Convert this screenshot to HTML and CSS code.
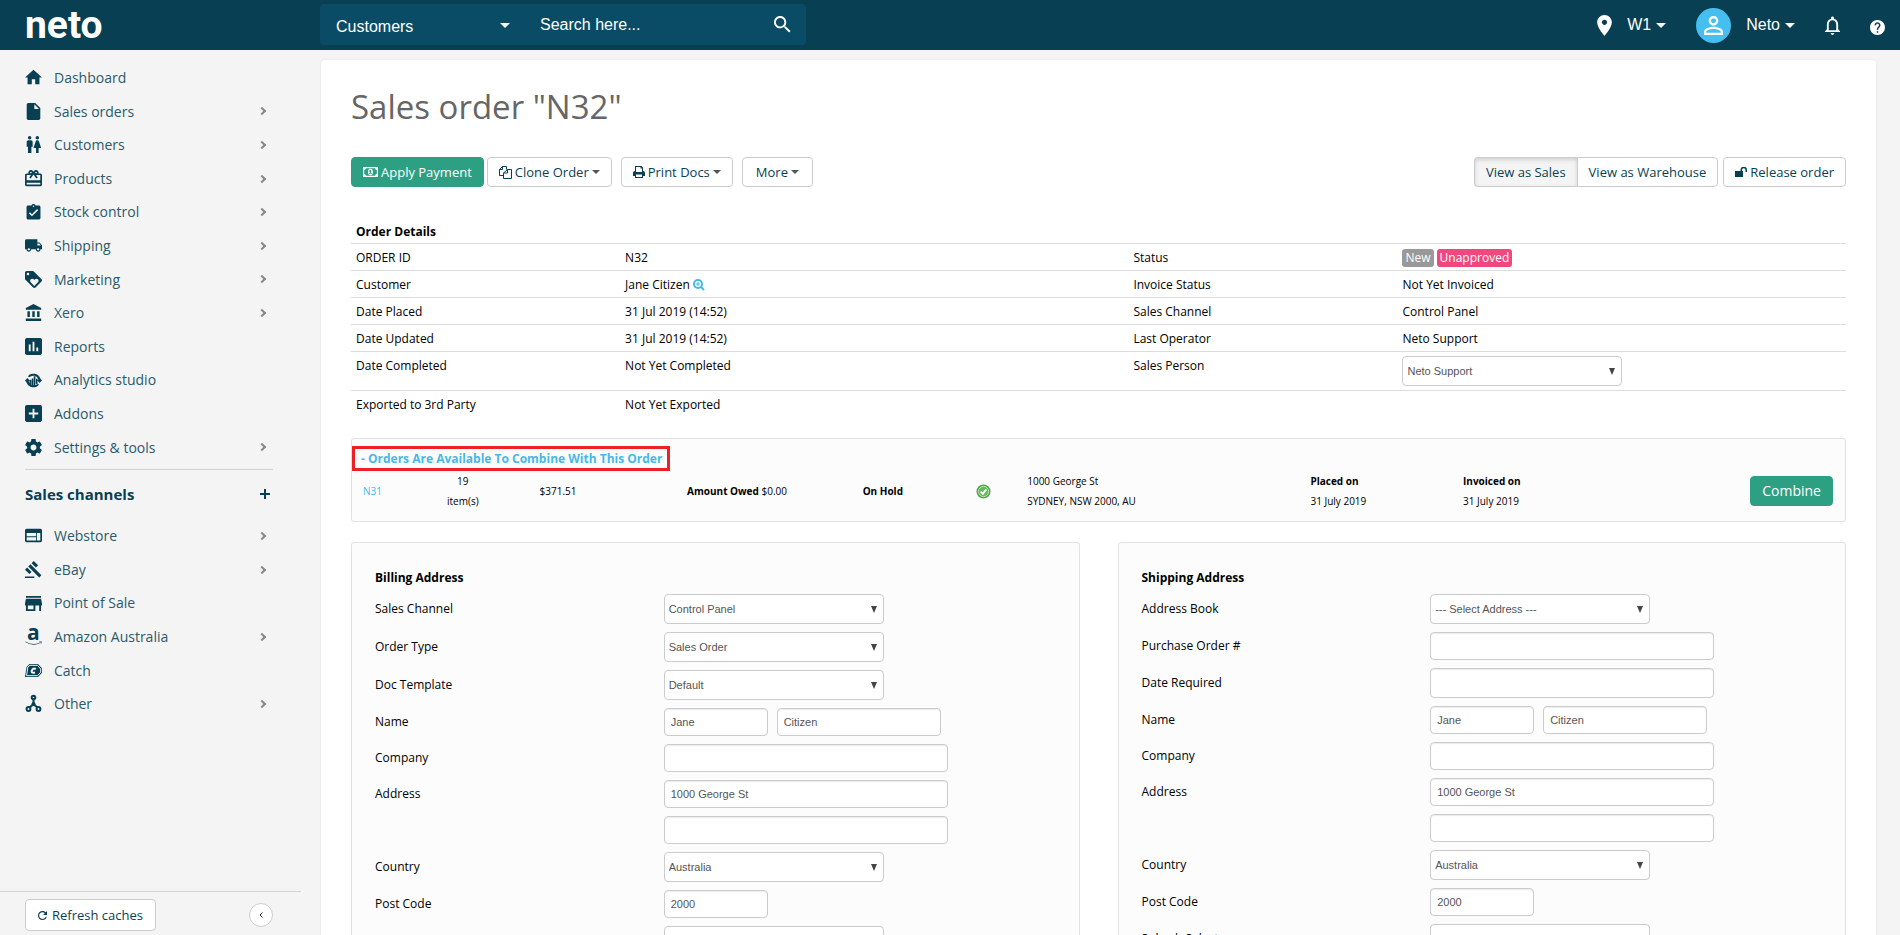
FILE: index.html
```html
<!DOCTYPE html>
<html lang="en">
<head>
<meta charset="utf-8">
<title>Sales order "N32"</title>
<link rel="stylesheet" href="styles.css">
</head>
<body class="app">
<header class="topbar">
  <a class="logo" href="#">neto</a>
  <form class="search">
    <span class="search-scope"><select class="scope-select" aria-label="Search in"><option>Customers</option></select></span>
    <input class="search-input" type="text" placeholder="Search here..." aria-label="Search">
    <button class="search-button" type="button" aria-label="Search"><svg viewBox="3 3 18 18" width="17" height="17"><path d="M15.5 14h-.79l-.28-.27C15.41 12.59 16 11.11 16 9.500 16 5.910 13.090 3 9.500 3S3 5.910 3 9.500 5.910 16 9.500 16c1.610 0 3.090-.59 4.230-1.570l.27.28v.79l5 4.990L20.490 19l-4.990-5zm-6 0C7.010 14 5 11.990 5 9.500S7.010 5 9.500 5 14 7.010 14 9.500 11.990 14 9.500 14z"/></svg></button>
  </form>
  <nav class="account">
    <a class="account-link warehouse" href="#"><svg viewBox="5 2 14 20" width="15" height="21"><path d="M12 2C8.130 2 5 5.130 5 9c0 5.250 7 13 7 13s7-7.750 7-13c0-3.870-3.130-7-7-7zm0 9.500c-1.380 0-2.500-1.120-2.500-2.500s1.120-2.500 2.500-2.500 2.500 1.120 2.500 2.500-1.120 2.500-2.500 2.500z"/></svg><span class="dropdown-text">W1<i class="caret caret-lg"></i></span></a>
    <a class="account-link user" href="#"><span class="avatar"><svg viewBox="4 4 16 16" width="19" height="19"><path d="M12 5.900c1.160 0 2.100.94 2.100 2.100s-.94 2.100-2.100 2.100S9.900 9.160 9.900 8s.94-2.100 2.100-2.100m0 9c2.970 0 6.100 1.460 6.100 2.100v1.100H5.900V17c0-.64 3.130-2.100 6.100-2.100M12 4C9.790 4 8 5.790 8 8s1.790 4 4 4 4-1.790 4-4-1.790-4-4-4zm0 9c-2.670 0-8 1.340-8 4v3h16v-3c0-2.660-5.330-4-8-4z"/></svg></span><span class="dropdown-text">Neto<i class="caret caret-lg"></i></span></a>
    <button class="icon-button bell" type="button" aria-label="Notifications"><svg viewBox="4 2 16 20" width="15" height="19"><path d="M12 22c1.100 0 2-.9 2-2h-4c0 1.100.9 2 2 2zm6-6v-5c0-3.070-1.630-5.640-4.500-6.320V4c0-.83-.67-1.500-1.500-1.500s-1.500.67-1.500 1.500v.68C7.640 5.360 6 7.920 6 11v5l-2 2v1h16v-1l-2-2zm-2 1H8v-6c0-2.480 1.510-4.500 4-4.500s4 2.020 4 4.500v6z"/></svg></button>
    <button class="icon-button help" type="button" aria-label="Help"><svg viewBox="2 2 20 20" width="15" height="15"><path d="M12 2C6.480 2 2 6.480 2 12s4.480 10 10 10 10-4.480 10-10S17.520 2 12 2zm1 17h-2v-2h2v2zm2.070-7.750l-.9.92C13.450 12.900 13 13.500 13 15h-2v-.5c0-1.100.45-2.100 1.170-2.830l1.240-1.260c.37-.36.59-.86.59-1.410 0-1.100-.9-2-2-2s-2 .9-2 2H8c0-2.210 1.790-4 4-4s4 1.790 4 4c0 .88-.36 1.680-.93 2.250z"/></svg></button>
  </nav>
</header>
<div class="shell">
  <aside class="sidebar">
    <ul class="menu">
      <li><a class="menu-link" href="#"><svg class="menu-icon" viewBox="2 2 20 20"><path d="M10 20v-6h4v6h5v-8h3L12 3 2 12h3v8z"/></svg>Dashboard</a></li>
      <li><a class="menu-link has-children" href="#"><svg class="menu-icon" viewBox="2 2 20 20"><path d="M6 2c-1.100 0-1.990.9-1.990 2L4 20c0 1.100.89 2 1.990 2H18c1.100 0 2-.9 2-2V8l-6-6H6zm7 7V3.500L18.500 9H13z"/></svg>Sales orders</a></li>
      <li><a class="menu-link has-children" href="#"><svg class="menu-icon" viewBox="2 2 20 20"><path d="M5.500 22v-7.500H4V9c0-1.100.9-2 2-2h3c1.100 0 2 .9 2 2v5.500H9.500V22h-4zM18 22v-6h3l-2.540-7.630C18.180 7.550 17.420 7 16.560 7h-.12c-.86 0-1.630.55-1.900 1.370L12 16h3v6h3zM7.500 6c1.110 0 2-.89 2-2s-.89-2-2-2-2 .89-2 2 .89 2 2 2zm9 0c1.110 0 2-.89 2-2s-.89-2-2-2-2 .89-2 2 .89 2 2 2z"/></svg>Customers</a></li>
      <li><a class="menu-link has-children" href="#"><svg class="menu-icon" viewBox="2 2 20 20"><path d="M20 6h-2.180c.11-.31.18-.65.18-1 0-1.660-1.340-3-3-3-1.050 0-1.960.54-2.500 1.350l-.5.67-.5-.68C10.960 2.540 10.050 2 9 2 7.340 2 6 3.340 6 5c0 .35.07.69.18 1H4c-1.110 0-1.990.89-1.990 2L2 19c0 1.110.89 2 2 2h16c1.110 0 2-.89 2-2V8c0-1.110-.89-2-2-2zm-5-2c.55 0 1 .45 1 1s-.45 1-1 1-1-.45-1-1 .45-1 1-1zM9 4c.55 0 1 .45 1 1s-.45 1-1 1-1-.45-1-1 .45-1 1-1zm11 15H4v-2h16v2zm0-5H4V8h5.080L7 10.830 8.620 12 11 8.760l1-1.360 1 1.360L15.380 12 17 10.830 14.920 8H20v6z"/></svg>Products</a></li>
      <li><a class="menu-link has-children" href="#"><svg class="menu-icon" viewBox="1 1 22 22"><path d="M19 3h-4.180C14.400 1.840 13.300 1 12 1c-1.300 0-2.400.84-2.820 2H5c-1.100 0-2 .9-2 2v14c0 1.100.9 2 2 2h14c1.100 0 2-.9 2-2V5c0-1.100-.9-2-2-2zm-7 0c.55 0 1 .45 1 1s-.45 1-1 1-1-.45-1-1 .45-1 1-1zm-2 14l-4-4 1.410-1.410L10 14.170l6.590-6.590L18 9l-8 8z"/></svg>Stock control</a></li>
      <li><a class="menu-link has-children" href="#"><svg class="menu-icon" viewBox="1 1 22 22"><path d="M20 8h-3V4H3c-1.100 0-2 .9-2 2v11h2c0 1.660 1.340 3 3 3s3-1.340 3-3h6c0 1.660 1.340 3 3 3s3-1.340 3-3h2v-5l-3-4zM6 18.500c-.83 0-1.500-.67-1.500-1.500s.67-1.500 1.500-1.500 1.500.67 1.500 1.500-.67 1.500-1.500 1.500zm13.500-9l1.960 2.500H17V9.500h2.500zm-1.500 9c-.83 0-1.500-.67-1.500-1.500s.67-1.500 1.500-1.500 1.500.67 1.500 1.500-.67 1.500-1.500 1.500z"/></svg>Shipping</a></li>
      <li><a class="menu-link has-children" href="#"><svg class="menu-icon" viewBox="2 2 20 20"><path d="M21.410 11.580l-9-9C12.050 2.220 11.550 2 11 2H4c-1.100 0-2 .9-2 2v7c0 .55.22 1.050.59 1.420l9 9c.36.36.86.58 1.410.58.55 0 1.050-.22 1.410-.59l7-7c.37-.36.59-.86.59-1.410 0-.55-.23-1.060-.59-1.420zM5.500 7C4.670 7 4 6.330 4 5.500S4.670 4 5.500 4 7 4.670 7 5.500 6.330 7 5.500 7zm11.770 8.270L13 19.540l-4.270-4.270C8.280 14.810 8 14.190 8 13.500c0-1.380 1.120-2.500 2.500-2.500.69 0 1.320.28 1.770.74l.73.72.73-.73c.45-.45 1.080-.73 1.770-.73 1.380 0 2.500 1.120 2.500 2.500 0 .69-.28 1.320-.73 1.770z"/></svg>Marketing</a></li>
      <li><a class="menu-link has-children" href="#"><svg class="menu-icon" viewBox="1 1 21 21"><path d="M4 10v7h3v-7H4zm6 0v7h3v-7h-3zM2 22h19v-3H2v3zm14-12v7h3v-7h-3zm-4.500-9L2 6v2h19V6l-9.500-5z"/></svg>Xero</a></li>
      <li><a class="menu-link" href="#"><svg class="menu-icon" viewBox="3 3 18 18"><path d="M19 3H5c-1.100 0-2 .9-2 2v14c0 1.100.9 2 2 2h14c1.100 0 2-.9 2-2V5c0-1.100-.9-2-2-2zM9 17H7v-7h2v7zm4 0h-2V7h2v10zm4 0h-2v-4h2v4z"/></svg>Reports</a></li>
      <li><a class="menu-link" href="#"><svg class="menu-icon" viewBox="0 0 20 20"><path d="M5.500 9h2v5.500h-2zM8 7.500h1.800v8H8zM10.300 5h1.900v10.500h-1.900zM12.800 8h1.900v6h-1.900zM3.500 5A8.500 8.500 0 0 1 18 7.500l2 2.500-3 3-2.800-3.500 1.600-.5A6.400 6.400 0 0 0 5 6.300zM16.500 15A8.500 8.500 0 0 1 2 12.500L0 10l3-3 2.800 3.500-1.600.5A6.400 6.400 0 0 0 15 13.700z"/></svg>Analytics studio</a></li>
      <li><a class="menu-link" href="#"><svg class="menu-icon" viewBox="3 3 18 18"><path d="M19 3H5c-1.110 0-2 .9-2 2v14c0 1.100.89 2 2 2h14c1.100 0 2-.9 2-2V5c0-1.100-.9-2-2-2zm-2 10h-4v4h-2v-4H7v-2h4V7h2v4h4v2z"/></svg>Addons</a></li>
      <li><a class="menu-link has-children" href="#"><svg class="menu-icon" viewBox="2 2 20 20"><path d="M19.430 12.980c.04-.32.07-.64.07-.98s-.03-.66-.07-.98l2.110-1.650c.19-.15.24-.42.12-.64l-2-3.460c-.12-.22-.39-.3-.61-.22l-2.490 1c-.52-.4-1.080-.73-1.690-.98l-.38-2.650C14.460 2.180 14.250 2 14 2h-4c-.25 0-.46.18-.49.42l-.38 2.650c-.61.25-1.170.59-1.690.98l-2.490-1c-.23-.09-.49 0-.61.22l-2 3.460c-.13.22-.07.49.12.64l2.110 1.650c-.04.32-.07.65-.07.98s.03.66.07.98l-2.110 1.650c-.19.15-.24.42-.12.64l2 3.460c.12.22.39.3.61.22l2.490-1c.52.4 1.080.73 1.690.98l.38 2.650c.03.24.24.42.49.42h4c.25 0 .46-.18.49-.42l.38-2.650c.61-.25 1.170-.59 1.690-.98l2.490 1c.23.09.49 0 .61-.22l2-3.460c.12-.22.07-.49-.12-.64l-2.110-1.650zM12 15.500c-1.930 0-3.500-1.570-3.500-3.500s1.570-3.500 3.500-3.500 3.500 1.570 3.500 3.500-1.570 3.500-3.500 3.500z"/></svg>Settings &amp; tools</a></li>
    </ul>
    <div class="channels-head"><h2 class="channels-title">Sales channels</h2><button class="icon-button" type="button" aria-label="Add sales channel"><svg viewBox="0 0 10 10" width="10" height="10"><path d="M4 0h2v4h4v2H6v4H4V6H0V4h4z"/></svg></button></div>
    <ul class="menu">
      <li><a class="menu-link has-children" href="#"><svg class="menu-icon" viewBox="2 2 20 20"><path d="M20 4H4c-1.100 0-1.990.9-1.990 2L2 18c0 1.100.9 2 2 2h16c1.100 0 2-.9 2-2V6c0-1.100-.9-2-2-2zm-5 14H4v-4h11v4zm0-5H4V9h11v4zm5 5h-4V9h4v9z"/></svg>Webstore</a></li>
      <li><a class="menu-link has-children" href="#"><svg class="menu-icon" viewBox="1 1 22 22"><path d="M1 21h12v2H1zM5.245 8.070l2.830-2.827 14.140 14.142-2.828 2.828zM12.317 1l5.657 5.656-2.830 2.830-5.654-5.660zM3.825 9.485l5.657 5.657-2.828 2.828-5.657-5.657z"/></svg>eBay</a></li>
      <li><a class="menu-link" href="#"><svg class="menu-icon" viewBox="3 3 18 18"><path d="M20 4H4v2h16V4zm1 10v-2l-1-5H4l-1 5v2h1v6h10v-6h4v6h2v-6h1zm-9 4H6v-4h6v4z"/></svg>Point of Sale</a></li>
      <li><a class="menu-link has-children" href="#"><svg class="menu-icon" viewBox="0 0 17 17"><text class="amazon-letter" x="2" y="12">a</text><path d="M.5 13.500Q8 18 14.800 14.400l.4.700Q8 19 .3 14zM13.500 13.600l3.300-.2-.8 2.800-.4-1.900z"/></svg>Amazon Australia</a></li>
      <li><a class="menu-link" href="#"><svg class="menu-icon" viewBox="0 0 17 17"><path d="M4.500 2H13l4 4.300v4.400L13 15H0l1.500-10z"/><path class="knock" d="M5 3.300h7.500L15.700 7v3.200l-3.200 3.500H1.600L2.800 5z"/><path d="M4.800 4.600h6.600L13.800 8.500 11.400 12.600H3.200l1-7z"/><path class="knock knock-bold" d="M10.800 7.200Q8.300 5.500 6.900 8.500T10 10.600"/></svg>Catch</a></li>
      <li><a class="menu-link has-children" href="#"><svg class="menu-icon stroke-icon" viewBox="0 0 17 17"><circle cx="8.500" cy="2.500" r="1.800"/><circle cx="3.500" cy="14" r="1.900"/><circle cx="13.500" cy="14" r="1.900"/><circle cx="8.500" cy="9" r="1"/><path d="M8.500 4.300V8M7.700 9.800l-3 2.700M9.300 9.800l3 2.700"/></svg>Other</a></li>
    </ul>
    <div class="sidebar-foot">
      <button class="refresh" type="button"><svg viewBox="4 4 16 16" width="9" height="9"><path d="M17.650 6.350C16.200 4.900 14.210 4 12 4c-4.420 0-7.990 3.580-7.990 8s3.570 8 7.990 8c3.730 0 6.840-2.550 7.730-6h-2.080c-.82 2.330-3.040 4-5.650 4-3.310 0-6-2.690-6-6s2.690-6 6-6c1.660 0 3.140.69 4.220 1.780L13 11h7V4l-2.350 2.350z"/></svg>Refresh caches</button>
      <button class="collapse" type="button" aria-label="Collapse menu"><svg viewBox="0 0 4 6" width="4" height="6"><path d="M3.500.5L1 3l2.500 2.500"/></svg></button>
    </div>
  </aside>
  <main class="main">
    <div class="card">
      <h1 class="page-title">Sales order "N32"</h1>
      <div class="toolbar">
        <div class="tool-group">
          <button class="btn btn-primary payment" type="button"><svg viewBox="0 0 15 10" width="15" height="10"><path fill-rule="evenodd" d="M0 0h15v10H0zM3 1.200A2 2 0 0 1 1.200 3v4A2 2 0 0 1 3 8.800h9A2 2 0 0 1 13.800 7V3A2 2 0 0 1 12 1.200zM7.500 1.800a2.400 3.200 0 0 1 0 6.400 2.400 3.200 0 0 1 0-6.400zM7 3l-1 .8v.6l.8-.2V6H6v.8h3V6h-.8V3z"/></svg>Apply Payment</button>
          <button class="btn clone" type="button"><svg class="line" viewBox="0 0 13 13" width="13" height="13"><path d="M3.500.5h4v3M3.500.5L.5 3.500v6h4M3.500.5v3h-3M8.500 3.500h4v9h-8V7zM8.500 3.500v3.500h-4"/></svg>Clone Order<i class="caret"></i></button>
          <button class="btn" type="button"><svg viewBox="0 0 12 12" width="12" height="12"><path fill-rule="evenodd" d="M2 0h6.500L10 1.500V5a2 2 0 0 1 2 2v3h-2v2H2v-2H0V7a2 2 0 0 1 2-2zm1 1v5h6V2.500H7.500V1zm0 7.500V11h6V8.500z"/></svg>Print Docs<i class="caret"></i></button>
          <button class="btn btn-roomy" type="button">More<i class="caret"></i></button>
        </div>
        <div class="tool-group view-group">
          <div class="segmented"><button class="btn active" type="button">View as Sales</button><button class="btn" type="button">View as Warehouse</button></div>
          <button class="btn" type="button"><svg viewBox="0 0 12 10" width="12" height="10"><path d="M0 4h5.500V3a3 3 0 0 1 6.500 0v2h-1.500V3a1.500 1.500 0 0 0-3.500 0v1H8v6H0z"/></svg>Release order</button>
        </div>
      </div>

      <table class="details">
        <colgroup><col class="c-name"><col class="c-wide"><col class="c-name"><col class="c-last"></colgroup>
        <thead><tr><th colspan="4">Order Details</th></tr></thead>
        <tbody>
          <tr><td>ORDER ID</td><td>N32</td><td>Status</td><td><span class="tags"><span class="tag tag-new">New</span><span class="tag tag-unapproved">Unapproved</span></span></td></tr>
          <tr><td>Customer</td><td>Jane Citizen <a class="lookup" href="#" aria-label="View customer"><svg viewBox="0 0 12 12" width="12" height="12"><circle cx="5" cy="5" r="4"/><path class="lens" d="M5 3v4M3 5h4"/><path d="M8 8l3 3"/></svg></a></td><td>Invoice Status</td><td>Not Yet Invoiced</td></tr>
          <tr><td>Date Placed</td><td>31 Jul 2019 (14:52)</td><td>Sales Channel</td><td>Control Panel</td></tr>
          <tr><td>Date Updated</td><td>31 Jul 2019 (14:52)</td><td>Last Operator</td><td>Neto Support</td></tr>
          <tr><td>Date Completed</td><td>Not Yet Completed</td><td><label for="person">Sales Person</label></td><td class="control-cell"><span class="select"><select id="person"><option>Neto Support</option></select></span></td></tr>
          <tr><td>Exported to 3rd Party</td><td>Not Yet Exported</td><td></td><td></td></tr>
        </tbody>
      </table>

      <section class="combine">
        <a class="combine-title" href="#">- Orders Are Available To Combine With This Order</a>
        <div class="combine-row">
          <a href="#">N31</a>
          <span class="items">19<br>item(s)</span>
          <span>$371.51</span>
          <span><b>Amount Owed</b> $0.00</span>
          <b>On Hold</b>
          <span class="ok"><svg viewBox="0 0 16 16" width="15" height="15"><circle class="ok-ring" cx="8" cy="8" r="7.500"/><circle class="ok-disc" cx="8" cy="8" r="5.500"/><path class="ok-tick" d="M5 8.200l2.200 2.300L11 5.800"/></svg></span>
          <span>1000 George St<br>SYDNEY, NSW 2000, AU</span>
          <span><b>Placed on</b><br>31 July 2019</span>
          <span><b>Invoiced on</b><br>31 July 2019</span>
          <button class="btn btn-primary combine-btn" type="button">Combine</button>
        </div>
      </section>

      <div class="panels">
        <section class="panel">
          <h3 class="panel-title">Billing Address</h3>
          <div class="field"><label for="b-channel">Sales Channel</label><span class="select"><select id="b-channel"><option>Control Panel</option></select></span></div>
          <div class="field"><label for="b-type">Order Type</label><span class="select"><select id="b-type"><option>Sales Order</option></select></span></div>
          <div class="field"><label for="b-doc">Doc Template</label><span class="select"><select id="b-doc"><option>Default</option></select></span></div>
          <div class="field"><label for="b-first">Name</label><span class="inputs"><input class="text short" id="b-first" value="Jane"><input class="text medium" aria-label="Last name" value="Citizen"></span></div>
          <div class="field"><label for="b-company">Company</label><input class="text" id="b-company"></div>
          <div class="field"><label for="b-addr">Address</label><input class="text" id="b-addr" value="1000 George St"></div>
          <div class="field"><span></span><input class="text" aria-label="Address line 2"></div>
          <div class="field"><label for="b-country">Country</label><span class="select"><select id="b-country"><option>Australia</option></select></span></div>
          <div class="field"><label for="b-post">Post Code</label><input class="text short" id="b-post" value="2000"></div>
          <div class="field"><span></span><span class="select"><select aria-label="Suburb"><option></option></select></span></div>
        </section>
        <section class="panel">
          <h3 class="panel-title">Shipping Address</h3>
          <div class="field"><label for="s-book">Address Book</label><span class="select"><select id="s-book"><option>--- Select Address ---</option></select></span></div>
          <div class="field"><label for="s-po">Purchase Order #</label><input class="text" id="s-po"></div>
          <div class="field"><label for="s-date">Date Required</label><input class="text tall" id="s-date"></div>
          <div class="field"><label for="s-first">Name</label><span class="inputs"><input class="text short" id="s-first" value="Jane"><input class="text medium" aria-label="Last name" value="Citizen"></span></div>
          <div class="field"><label for="s-company">Company</label><input class="text" id="s-company"></div>
          <div class="field"><label for="s-addr">Address</label><input class="text" id="s-addr" value="1000 George St"></div>
          <div class="field"><span></span><input class="text" aria-label="Address line 2"></div>
          <div class="field"><label for="s-country">Country</label><span class="select"><select id="s-country"><option>Australia</option></select></span></div>
          <div class="field"><label for="s-post">Post Code</label><input class="text short" id="s-post" value="2000"></div>
          <div class="field"><label for="s-suburb">Suburb Select</label><span class="select"><select id="s-suburb"><option>SYDNEY , NSW</option></select></span></div>
        </section>
      </div>
    </div>
  </main>
</div>
</body>
</html>
```
FILE: styles.css
```css
*, *::before, *::after { box-sizing: border-box; }

.app {
  --ink: #083f52;
  --green: #2d9f83;
  --blue: #45b9e9;
  --ui: "Open Sans", "Noto Sans", sans-serif;
  --form: "Liberation Sans", Arial, sans-serif;
  margin: 0;
  height: 100vh;
  display: flex;
  flex-direction: column;
  overflow: hidden;
  background: #f4f4f4;
  color: #000;
  font: 12px/18px var(--ui);
}

a { color: var(--blue); text-decoration: none; }
svg { fill: currentColor; flex: none; }

/* Top bar */
.topbar {
  flex: none;
  height: 50px;
  display: flex;
  align-items: center;
  background: var(--ink);
  color: #fff;
  font: 16px/20px var(--form);
}
.logo {
  width: 320px;
  padding-left: 25px;
  color: #fff;
  font: 700 39px/44px Roboto, sans-serif;
}
.search {
  width: 486px;
  height: 41px;
  display: flex;
  align-items: center;
  margin-bottom: 1px;
  background: #0a4c66;
  border-radius: 4px;
}
.search-scope { position: relative; width: 204px; }
.search-scope::after {
  content: "";
  position: absolute;
  right: 14px;
  top: 19px;
  border: 5px solid transparent;
  border-top-color: #fff;
  border-bottom: 0;
}
.scope-select {
  appearance: none;
  width: 100%;
  height: 41px;
  padding: 4px 16px 0;
  border: 0;
  background: none;
  color: #fff;
  font: inherit;
}
.search-input {
  flex: 1;
  min-width: 0;
  height: 41px;
  padding: 0 16px;
  border: 0;
  background: none;
  color: #fff;
  font: inherit;
}
.search-input::placeholder { color: #fff; opacity: 1; }
.search-button {
  width: 48px;
  height: 41px;
  padding: 3px 0 0;
  border: 0;
  background: none;
  color: #fff;
}
.account { margin-left: auto; display: flex; align-items: center; padding-right: 15px; }
.account-link { display: flex; align-items: center; gap: 15px; margin-right: 30px; color: #fff; }
.dropdown-text { display: flex; align-items: center; }
.caret {
  display: inline-block;
  margin-left: 3px;
  border: 4px solid transparent;
  border-top-color: #555;
  border-bottom: 0;
}
.caret-lg { margin-left: 5px; border-width: 5px 5px 0; border-top-color: #fff; }
.avatar {
  width: 35px;
  height: 35px;
  display: grid;
  place-items: center;
  border-radius: 50%;
  background: #45bff0;
}
.icon-button { display: flex; padding: 0; border: 0; background: none; color: inherit; }
.bell { margin-right: 30px; }
.help { margin-top: 4px; }

/* Side menu */
.shell { flex: 1; min-height: 0; display: flex; }
.sidebar {
  flex: none;
  width: 320px;
  display: flex;
  flex-direction: column;
  padding-top: 11px;
  color: var(--ink);
}
.menu { list-style: none; margin: 0; padding: 0 47px 0 25px; }
.menu-link {
  display: flex;
  align-items: center;
  gap: 12px;
  padding: 7px 0;
  color: #2b5a6a;
  font-size: 14px;
  line-height: 1.4;
}
.menu-icon { width: 17px; height: 17px; fill: var(--ink); overflow: visible; }
.has-children::after {
  content: "";
  width: 6px;
  height: 6px;
  margin: 0 8px 0 auto;
  border: solid #888;
  border-width: 2px 2px 0 0;
  transform: rotate(45deg);
}
.menu-icon .knock { fill: none; stroke: #f4f4f4; }
.menu-icon .knock-bold { stroke-width: 2; }
.amazon-letter { font: 700 21px "Open Sans", sans-serif; }
.stroke-icon { fill: none; stroke: var(--ink); stroke-width: 2; }
.channels-head {
  display: flex;
  align-items: center;
  justify-content: space-between;
  margin: 5px 47px 0 25px;
  padding: 12px 3px 13px 0;
  border-top: 1px solid #d4d4d4;
}
.channels-title { margin: 0; font-size: 15px; line-height: 24px; font-weight: 700; }
.sidebar-foot {
  margin: auto 19px 0 0;
  display: flex;
  align-items: center;
  justify-content: space-between;
  padding: 7px 28px 4px 25px;
  border-top: 1px solid #d4d4d4;
}
.refresh {
  display: flex;
  align-items: center;
  gap: 5px;
  height: 32px;
  padding: 0 12px;
  border: 1px solid #ccc;
  border-radius: 4px;
  background: #fff;
  color: var(--ink);
  font: 13px/18px var(--ui);
}
.collapse {
  width: 24px;
  height: 24px;
  display: grid;
  place-items: center;
  padding: 0;
  border: 1px solid #ccc;
  border-radius: 50%;
  background: #fff;
}
.collapse svg { fill: none; stroke: #222; }

/* Page */
.main { flex: 1; min-width: 0; overflow: auto; scrollbar-width: none; padding: 10px 24px 0 1px; }
.card {
  padding: 24px 30px;
  border-radius: 4px;
  background: #fff;
  box-shadow: 0 0 3px rgba(0, 0, 0, .08);
}
.page-title { margin: 0; color: #666; font-size: 33px; line-height: 46px; font-weight: 400; }
.toolbar { display: flex; justify-content: space-between; margin: 27px 0 34px; }
.tool-group { display: flex; gap: 9px; }
.view-group { gap: 5px; }
.btn {
  display: flex;
  align-items: center;
  justify-content: center;
  gap: 3px;
  height: 30px;
  padding: 0 11px;
  border: 1px solid #ccc;
  border-radius: 4px;
  background: #fff;
  color: var(--ink);
  font: 13px/18px var(--ui);
  white-space: nowrap;
}
.btn .caret { margin-left: 0; }
.btn-primary { border-color: var(--green); background: var(--green); color: #fff; }
.btn-roomy { padding: 0 13px; }
.payment { margin-right: -6px; }
.line { fill: none; stroke: currentColor; }
.segmented { display: flex; }
.segmented .btn { border-radius: 0 4px 4px 0; }
.segmented .active {
  border-radius: 4px 0 0 4px;
  border-right: 0;
  background: #f4f4f4;
  box-shadow: inset 0 2px 4px rgba(0, 0, 0, .15);
}

.details { width: 100%; table-layout: fixed; border-collapse: collapse; }
.details th { padding: 2px 5px; text-align: left; }
.details td { padding: 5px 5px 3px; border-top: 1px solid #ddd; vertical-align: top; }
.details .control-cell { padding: 4px 5px; }
.c-name { width: 18%; }
.c-wide { width: 34%; }
.c-last { width: 30%; }
.tags { display: flex; gap: 3px; }
.tag {
  padding: 0 3px;
  border-radius: 3px;
  color: #fff;
}
.tag-new { background: #999; }
.tag-unapproved { background: #f0487e; }
.lookup svg { fill: none; stroke: currentColor; stroke-width: 2; vertical-align: -2px; }
.lookup .lens { stroke-width: 1; }

/* Form controls */
.select { position: relative; display: block; width: 220px; }
.select::after {
  content: "";
  position: absolute;
  right: 7px;
  top: 12px;
  border: 3px solid transparent;
  border-top: 7px solid #444;
  border-bottom: 0;
}
.select select {
  appearance: none;
  display: block;
  width: 100%;
  height: 30px;
  padding: 0 20px 0 4px;
  border: 1px solid #ccc;
  border-radius: 4px;
  background: #fff;
  color: #555;
  font: 11px/16px var(--form);
}
.text {
  width: 284px;
  height: 28px;
  padding: 0 6px;
  border: 1px solid #ccc;
  border-radius: 4px;
  background: #fff;
  box-shadow: inset 0 1px 1px rgba(0, 0, 0, .08);
  color: #555;
  font: 11px/16px var(--form);
}
.short { width: 104px; }
.medium { width: 164px; }
.tall { height: 30px; }

/* Combine box */
.combine {
  margin-top: 21px;
  padding: 7px 12px 10px 0;
  border: 1px solid #e2e2e2;
  border-radius: 3px;
  background: #fcfcfc;
}
.combine-title {
  display: inline-block;
  padding: 1px 5px 0 6px;
  border: 3px solid #ed2027;
  font-weight: 700;
}
.combine-row {
  display: grid;
  grid-template-columns: 60fr 117fr 148fr 176fr 114fr 51fr 284fr 153fr 288fr 80fr;
  align-items: center;
  padding-left: 11px;
  font-size: 10px;
  line-height: 20px;
}
.items { width: 80px; text-align: center; }
.ok { display: flex; }
.ok-ring { fill: #4fa34c; }
.ok-disc { fill: #62bb55; stroke: #c5e8bd; }
.ok-tick { fill: none; stroke: #fff; stroke-width: 2; }
.combine-btn { font-size: 14px; }

/* Address panels */
.panels { display: grid; grid-template-columns: 1fr 1fr; gap: 38px; margin-top: 20px; }
.panel {
  padding: 25px 30px 24px 23px;
  border: 1px solid #e2e2e2;
  border-radius: 3px;
  background: #fcfcfc;
}
.panel-title { margin: 0 0 6px; font-size: 12px; line-height: 20px; font-weight: 700; }
.field {
  display: grid;
  grid-template-columns: 3fr 4fr;
  align-items: center;
  margin-bottom: 8px;
}
.inputs { display: flex; gap: 9px; }
```
